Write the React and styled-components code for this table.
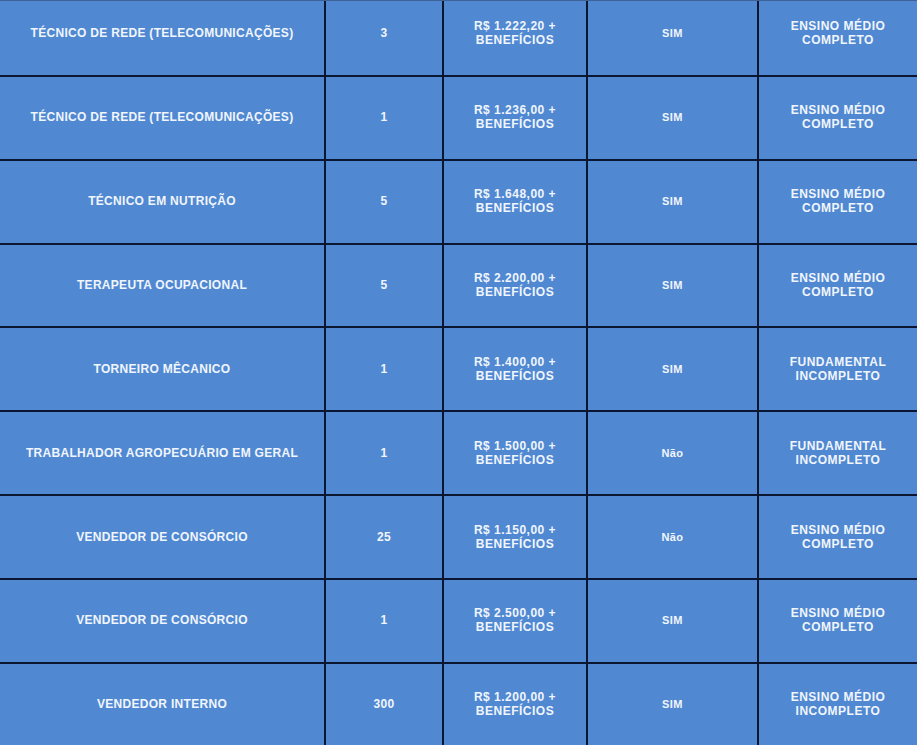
import React from "react";
import styled, { createGlobalStyle } from "styled-components";

const Global = createGlobalStyle`
  html, body { margin: 0; padding: 0; background: #5089d1; overflow: hidden; }
  body { width: 917px; height: 745px; }
`;

const Frame = styled.div`
  width: 917px;
  height: 745px;
  overflow: hidden;
  border-top: 1px solid #3f6296;
  box-sizing: border-box;
  background: #5089d1;
`;

const Table = styled.div`
  margin-top: -8px;
  display: grid;
  grid-template-columns: 326px 118px 144px 171px 158px;
  grid-auto-rows: 83.86px;
`;

const Cell = styled.div`
  box-sizing: border-box;
  display: flex;
  align-items: center;
  justify-content: center;
  text-align: center;
  background: #5089d1;
  border-bottom: 2px solid #0b1631;
  border-right: ${(p) => (p.$last ? "none" : "2px solid #0b1631")};
  color: #f1f5fd;
  font-family: "Liberation Sans", Arial, sans-serif;
  font-weight: bold;
  font-size: ${(p) => p.$size || 12}px;
  letter-spacing: ${(p) => p.$spacing ?? 0.5}px;
  line-height: 14px;
  white-space: pre-line;
  padding-bottom: 1px;
`;

const rows = [
  ["TÉCNICO DE REDE (TELECOMUNICAÇÕES)", "3", "R$ 1.222,20 +\nBENEFÍCIOS", "SIM", "ENSINO MÉDIO\nCOMPLETO"],
  ["TÉCNICO DE REDE (TELECOMUNICAÇÕES)", "1", "R$ 1.236,00 +\nBENEFÍCIOS", "SIM", "ENSINO MÉDIO\nCOMPLETO"],
  ["TÉCNICO EM NUTRIÇÃO", "5", "R$ 1.648,00 +\nBENEFÍCIOS", "SIM", "ENSINO MÉDIO\nCOMPLETO"],
  ["TERAPEUTA OCUPACIONAL", "5", "R$ 2.200,00 +\nBENEFÍCIOS", "SIM", "ENSINO MÉDIO\nCOMPLETO"],
  ["TORNEIRO MÊCANICO", "1", "R$ 1.400,00 +\nBENEFÍCIOS", "SIM", "FUNDAMENTAL\nINCOMPLETO"],
  ["TRABALHADOR AGROPECUÁRIO EM GERAL", "1", "R$ 1.500,00 +\nBENEFÍCIOS", "Não", "FUNDAMENTAL\nINCOMPLETO"],
  ["VENDEDOR DE CONSÓRCIO", "25", "R$ 1.150,00 +\nBENEFÍCIOS", "Não", "ENSINO MÉDIO\nCOMPLETO"],
  ["VENDEDOR DE CONSÓRCIO", "1", "R$ 2.500,00 +\nBENEFÍCIOS", "SIM", "ENSINO MÉDIO\nCOMPLETO"],
  ["VENDEDOR INTERNO", "300", "R$ 1.200,00 +\nBENEFÍCIOS", "SIM", "ENSINO MÉDIO\nINCOMPLETO"],
];

export default function App() {
  return (
    <>
      <Global />
      <Frame>
        <Table>
          {rows.map((r, i) => (
            <React.Fragment key={i}>
              <Cell $spacing={0.3}>{r[0]}</Cell>
              <Cell $spacing={0.3}>{r[1]}</Cell>
              <Cell>{r[2]}</Cell>
              <Cell $size={11} $spacing={0.4}>{r[3]}</Cell>
              <Cell $last>{r[4]}</Cell>
            </React.Fragment>
          ))}
        </Table>
      </Frame>
    </>
  );
}
